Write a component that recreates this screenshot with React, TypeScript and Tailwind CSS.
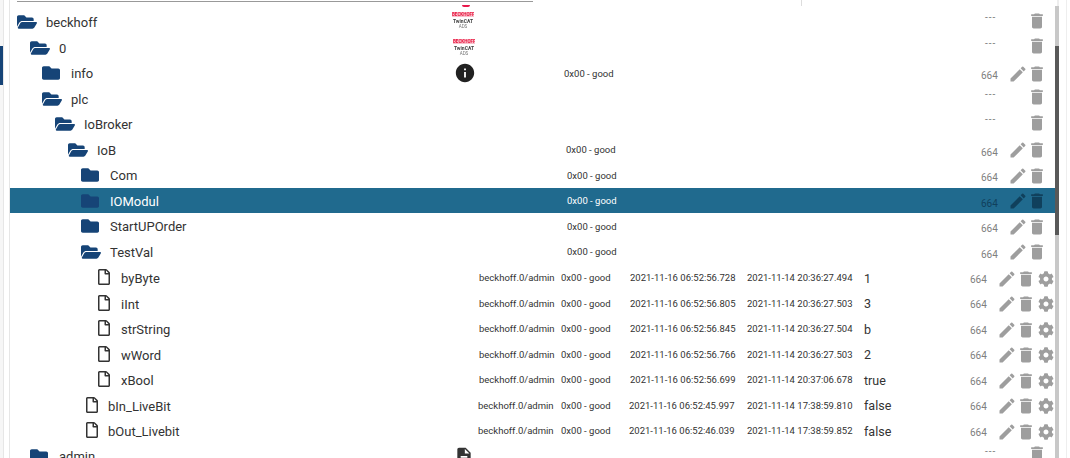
import { FaCog, FaFolder, FaFolderOpen, FaRegFile } from 'react-icons/fa'
import { MdDelete, MdDescription, MdEdit, MdInfo } from 'react-icons/md'

type Kind = 'open' | 'closed' | 'file'

type Row = {
  name: string
  kind: Kind
  pad: string
  gap: string
  left?: 'logo' | 'logo2' | 'info' | 'doc'
  statusPad?: string
  acl?: boolean
  active?: boolean
  id?: string
  ts?: string
  lc?: string
  val?: string
  shift?: boolean
}

const rows: Row[] = [
  { name: 'beckhoff', kind: 'open', pad: 'pl-[7px]', gap: 'w-[29px]', left: 'logo' },
  { name: '0', kind: 'open', pad: 'pl-[20px]', gap: 'w-[29px]', left: 'logo2' },
  { name: 'info', kind: 'closed', pad: 'pl-[32px]', gap: 'w-[29px]', left: 'info', statusPad: 'pl-[112px]', acl: true },
  { name: 'plc', kind: 'open', pad: 'pl-[32px]', gap: 'w-[29px]' },
  { name: 'IoBroker', kind: 'open', pad: 'pl-[45px]', gap: 'w-[29px]' },
  { name: 'IoB', kind: 'open', pad: 'pl-[58px]', gap: 'w-[29px]', statusPad: 'pl-[114px]', acl: true },
  { name: 'Com', kind: 'closed', pad: 'pl-[71px]', gap: 'w-[29px]', statusPad: 'pl-[115px]', acl: true },
  { name: 'IOModul', kind: 'closed', pad: 'pl-[71px]', gap: 'w-[29px]', statusPad: 'pl-[115px]', acl: true, active: true },
  { name: 'StartUPOrder', kind: 'closed', pad: 'pl-[71px]', gap: 'w-[29px]', statusPad: 'pl-[115px]', acl: true },
  { name: 'TestVal', kind: 'open', pad: 'pl-[71px]', gap: 'w-[29px]', statusPad: 'pl-[115px]', acl: true },
  { name: 'byByte', kind: 'file', pad: 'pl-[86px]', gap: 'w-[25px]', id: 'beckhoff.0/admin', ts: '2021-11-16 06:52:56.728', lc: '2021-11-14 20:36:27.494', val: '1' },
  { name: 'iInt', kind: 'file', pad: 'pl-[86px]', gap: 'w-[25px]', id: 'beckhoff.0/admin', ts: '2021-11-16 06:52:56.805', lc: '2021-11-14 20:36:27.503', val: '3' },
  { name: 'strString', kind: 'file', pad: 'pl-[86px]', gap: 'w-[25px]', id: 'beckhoff.0/admin', ts: '2021-11-16 06:52:56.845', lc: '2021-11-14 20:36:27.504', val: 'b' },
  { name: 'wWord', kind: 'file', pad: 'pl-[86px]', gap: 'w-[25px]', id: 'beckhoff.0/admin', ts: '2021-11-16 06:52:56.766', lc: '2021-11-14 20:36:27.503', val: '2' },
  { name: 'xBool', kind: 'file', pad: 'pl-[86px]', gap: 'w-[25px]', id: 'beckhoff.0/admin', ts: '2021-11-16 06:52:56.699', lc: '2021-11-14 20:37:06.678', val: 'true' },
  { name: 'bIn_LiveBit', kind: 'file', pad: 'pl-[74px]', gap: 'w-[24px]', id: 'beckhoff.0/admin', ts: '2021-11-16 06:52:45.997', lc: '2021-11-14 17:38:59.810', val: 'false', shift: true },
  { name: 'bOut_Livebit', kind: 'file', pad: 'pl-[74px]', gap: 'w-[24px]', id: 'beckhoff.0/admin', ts: '2021-11-16 06:52:46.039', lc: '2021-11-14 17:38:59.852', val: 'false', shift: true },
  { name: 'admin', kind: 'closed', pad: 'pl-[20px]', gap: 'w-[29px]', left: 'doc' },
]

const Logo = ({ pad }: { pad: string }) => (
  <div className={`${pad} flex w-[22px] flex-col items-center overflow-hidden whitespace-nowrap leading-none blur-[0.4px]`}>
    <span className="w-[22px] bg-[#f9c0cc] text-center text-[4.5px] font-bold leading-[5px] text-[#e8173f]">BECKHOFF</span>
    <span className="mt-[1px] text-[5px] font-bold leading-[6px] text-[#444]">TwinCAT</span>
    <span className="text-[4.5px] leading-[5px] text-[#777]">ADS</span>
  </div>
)

const RowIcon = ({ kind }: { kind: Kind }) => {
  if (kind === 'open') return <FaFolderOpen size={20} className="text-[#164477]" />
  if (kind === 'closed') return <FaFolder size={18} className="text-[#164477]" />
  return <FaRegFile size={16} className="text-[#333]" />
}

const Actions = ({ row }: { row: Row }) => {
  const iconColor = row.active ? 'text-[#10405c]' : 'text-[#9e9e9e]'
  const aclColor = row.active ? 'text-[#10405c]' : 'text-[#808080]'

  if (row.id) {
    return (
      <div className={`flex items-center ${iconColor}`}>
        <span className={`mt-[4px] w-[28px] text-[10px] ${aclColor}`}>664</span>
        <MdEdit size={20} className="mt-[3px] -ml-[1px]" />
        <MdDelete size={20} className="mt-[3px] -ml-[1px]" />
        <FaCog size={16} className="mt-[3px] ml-[2px] mr-[1px]" />
      </div>
    )
  }

  if (row.acl) {
    return (
      <div className={`flex items-center ${iconColor}`}>
        <span className={`mt-[5px] w-[27px] text-[10px] ${aclColor}`}>664</span>
        <MdEdit size={20} className="mt-[1px] -mr-[1px]" />
        <MdDelete size={20} className="mt-[1px] mr-[8px]" />
      </div>
    )
  }

  return (
    <div className={`flex items-center ${iconColor}`}>
      <span className={`mb-[9px] w-[42px] text-[10px] tracking-[1px] ${aclColor}`}>---</span>
      <MdDelete size={20} className="mb-[3px] mr-[8px]" />
    </div>
  )
}

const TreeRow = ({ row }: { row: Row }) => {
  const bg = row.active ? 'bg-[#206a8e]' : ''
  const nameColor = row.active ? 'text-white' : 'text-[#333]'
  const smallColor = row.active ? 'text-white' : 'text-[#333]'

  return (
    <div className={`flex h-[25.5px] shrink-0 items-center justify-between ${bg}`}>
      <div className="flex items-center">
        <div className={`flex items-center ${row.pad} ${row.id ? (row.shift ? 'w-[468px]' : 'w-[469px]') : 'w-[442px]'}`}>
          <div className={`${row.gap} shrink-0`}>
            <RowIcon kind={row.kind} />
          </div>
          <span className={`text-[13px] ${row.id ? 'mt-[4px]' : 'mt-[2px]'} ${nameColor}`}>{row.name}</span>
        </div>

        {row.id ? (
          <div className={`mt-[4px] flex items-center text-[9.5px] ${smallColor}`}>
            <span className={`mb-[1px] ${row.shift ? 'w-[83px]' : 'w-[82px]'}`}>{row.id}</span>
            <span className={`mb-[1px] ${row.shift ? 'w-[68px]' : 'w-[69px]'}`}>0x00 - good</span>
            <span className={`mb-[1px] ${row.shift ? 'w-[118px]' : 'w-[117px]'}`}>{row.ts}</span>
            <span className="mb-[1px] w-[117px]">{row.lc}</span>
            <span className="text-[12.5px]">{row.val}</span>
          </div>
        ) : (
          <div className="relative flex items-center">
            {row.left === 'logo' && <Logo pad="mb-[3px]" />}
            {row.left === 'logo2' && <Logo pad="ml-[1px] mb-[1px]" />}
            {row.left === 'info' && <MdInfo size={22} className="ml-[2px] text-[#222]" />}
            {row.left === 'doc' && <MdDescription size={20} className="ml-[2px] text-[#333]" />}
            {row.statusPad && (
              <span className={`${row.statusPad} absolute left-0 mt-[2px] whitespace-nowrap text-[9.5px] ${smallColor}`}>0x00 - good</span>
            )}
          </div>
        )}
      </div>

      <Actions row={row} />
    </div>
  )
}

export default function App() {
  return (
    <div className="flex h-[458px] w-[1070px] overflow-hidden bg-white font-['Roboto',sans-serif]">
      <div className="w-[3px] shrink-0 bg-[#f6f6f6] pt-[46px]">
        <div className="h-[39px] bg-[#164477]" />
      </div>
      <div className="w-[7px] shrink-0 border-x border-[#e6e6e6] bg-white" />

      <div className="relative flex w-[1045px] shrink-0 flex-col">
        <div className="h-[9.3px] shrink-0 pt-[1px]">
          <div className="ml-[7px] h-[1px] w-[516px] bg-[#999]" />
        </div>
        <div className="absolute left-[452px] top-[5px] h-[2px] w-[8px] rounded-b-full bg-[#e8174a]" />
        <div className="absolute left-[791px] top-0 h-[6px] w-[1px] bg-[#ddd]" />
        {rows.map((row) => (
          <TreeRow key={row.name} row={row} />
        ))}
      </div>

      <div className="flex w-[4px] shrink-0 flex-col">
        <div className="ml-[2px] h-[6px] w-[2px] bg-[#eee]" />
        <div className="h-[40px] bg-[#c8c8c8]" />
        <div className="h-[189px] bg-[#595959]" />
        <div className="flex-1 bg-[#c8c8c8]" />
      </div>

      <div className="ml-[7px] w-[1px] shrink-0 bg-[#eee]" />
    </div>
  )
}
